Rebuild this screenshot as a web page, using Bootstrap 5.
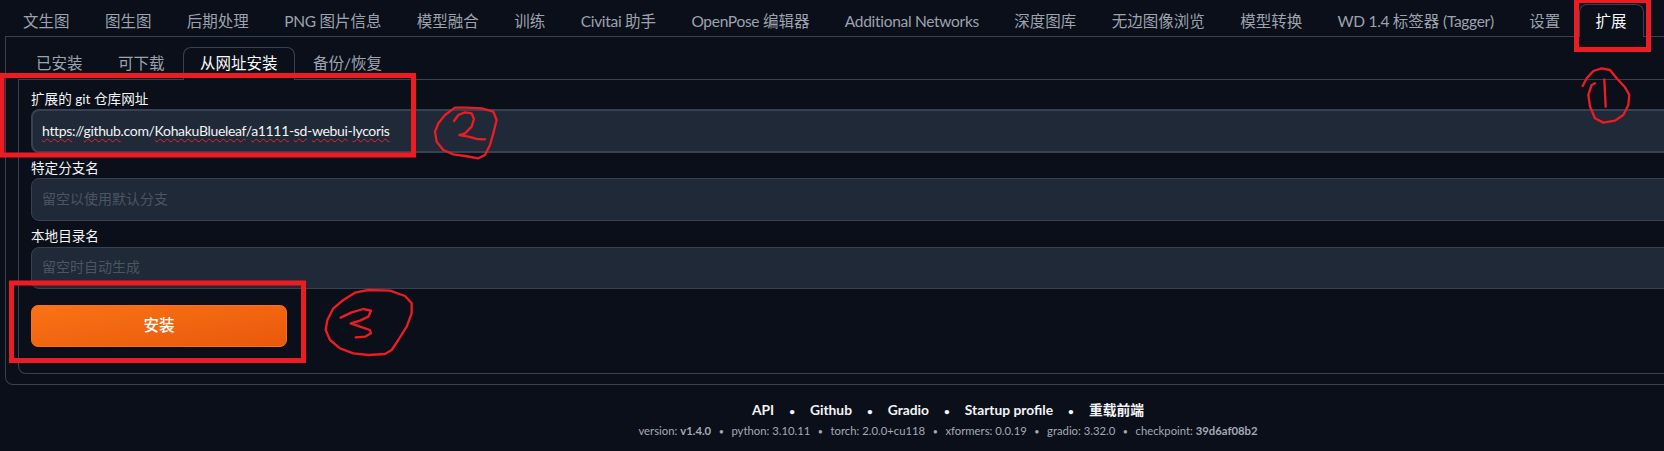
<!DOCTYPE html>
<html lang="zh-CN" data-bs-theme="dark">
<head>
    <meta charset="UTF-8">
    <meta name="viewport" content="width=device-width, initial-scale=1.0">
    <title>Extensions</title>

    <link href="https://cdn.jsdelivr.net/npm/bootstrap@5.3.3/dist/css/bootstrap.min.css" rel="stylesheet">
    <style>
        html, body { height: 451px; overflow: hidden; }
        body {
            position: relative;
            background: #0b0f19;
            color: #f3f4f6;
            font-family: Lato, "Noto Sans CJK SC", sans-serif;
        }
        /* the app is wider than the window, its right side is cut off */
        .app-wrap { width: 1886px; margin-left: 5px; }

        .webui-tabs { gap: 1.4px; border-bottom: 1px solid #374151; padding-top: 4px; padding-left: 1px; height: 37px; }
        .webui-sub { gap: 1.5px; border-bottom: 1px solid #374151; padding-left: 1px; height: 33px; }
        .webui-tabs .nav-link, .webui-sub .nav-link {
            height: 33px;
            padding: 0 16px;
            font-size: 15.5px;
            line-height: 31px;
            color: #9ca3af;
            white-space: nowrap;
            border: 1px solid transparent;
            border-bottom: 0;
            border-radius: 8px 8px 0 0;
            background: transparent;
            margin-bottom: -1px;
        }
        .webui-tabs .nav-link { line-height: 32px; }
        .webui-tabs .nav-link.active, .webui-sub .nav-link.active {
            color: #f9fafb;
            background: #0b0f19;
            border-color: #374151;
        }
        .lat { letter-spacing: -0.3px; }
        .outer-box {
            height: 348px;
            padding: 10px 12px;
            border: 1px solid #374151;
            border-top: 0;
            border-radius: 0 0 8px 8px;
        }
        .inner-box {
            height: 294px;
            padding: 9px 12px 0;
            border: 1px solid #374151;
            border-top: 0;
            border-radius: 0 0 8px 8px;
        }
        .field-label { font-size: 13.6px; line-height: 20px; margin-bottom: 0; color: #f3f4f6; display: block; }
        .label-gap { margin-top: 5px; padding-bottom: 1px; }
        .url-label-gap { margin-top: 5px; }
        .field-input {
            height: 42px;
            padding: 0 10px 3px;
            font-size: 14px;
            line-height: 36px;
            color: #f3f4f6;
            background: #1f2937;
            border: 1px solid #374151;
            border-radius: 8px;
            box-shadow: none;
        }
        .field-input::placeholder { color: #4b5563; }
        .branch-input { height: 43px; }
        .url-input { height: 44px; line-height: 39px; border-width: 2px; padding: 0 9px; letter-spacing: -0.33px; }
        .spell { text-decoration: underline wavy #e3262c 1px; text-underline-offset: 2px; text-decoration-skip-ink: none; }
        .install-btn {
            width: 256px;
            height: 42px;
            margin-top: 16px;
            padding: 0;
            font-size: 15.5px;
            font-weight: 500;
            color: #fff;
            border: 1px solid #f97316;
            border-radius: 7px;
            background: linear-gradient(to bottom right, #f97316, #ea580c);
        }
        .foot-links { font-size: 13.8px; font-weight: 700; line-height: 20px; color: #f3f4f6; padding-top: 15px; }
        .foot-links a { color: inherit; text-decoration: none; }
        .foot-links .dot { margin: 0 15px; font-size: 10px; }
        .foot-meta { font-size: 11.3px; line-height: 16px; color: #a3aab5; margin-top: 2px; }
        .foot-meta .dot { margin: 0 7.5px; font-size: 9px; }
        .foot-meta b { font-weight: 700; }
        .marks { position: absolute; left: 0; top: 0; pointer-events: none; }
        .marks * { fill: none; stroke: #ed1c24; stroke-linejoin: round; stroke-linecap: round; }
        .marks rect { stroke-linejoin: miter; stroke-width: 5; }
        .marks g path { stroke-width: 7; }
    </style>
</head>
<body>
    <div class="app-wrap">
        <ul class="nav webui-tabs">
            <li class="nav-item"><a class="nav-link" href="#">文生图</a></li>
            <li class="nav-item"><a class="nav-link" href="#">图生图</a></li>
            <li class="nav-item"><a class="nav-link" href="#">后期处理</a></li>
            <li class="nav-item"><a class="nav-link" href="#"><span class="lat">PNG </span>图片信息</a></li>
            <li class="nav-item"><a class="nav-link" href="#">模型融合</a></li>
            <li class="nav-item"><a class="nav-link" href="#">训练</a></li>
            <li class="nav-item"><a class="nav-link" href="#"><span class="lat">Civitai </span>助手</a></li>
            <li class="nav-item"><a class="nav-link" href="#"><span class="lat">OpenPose </span>编辑器</a></li>
            <li class="nav-item"><a class="nav-link" href="#"><span class="lat">Additional Networks</span></a></li>
            <li class="nav-item"><a class="nav-link" href="#">深度图库</a></li>
            <li class="nav-item"><a class="nav-link" href="#">无边图像浏览</a></li>
            <li class="nav-item"><a class="nav-link" href="#">模型转换</a></li>
            <li class="nav-item"><a class="nav-link" href="#"><span class="lat">WD 1.4 </span>标签器<span class="lat"> (Tagger)</span></a></li>
            <li class="nav-item"><a class="nav-link" href="#">设置</a></li>
            <li class="nav-item"><a class="nav-link active" href="#">扩展</a></li>
        </ul>
        <div class="outer-box">
            <ul class="nav webui-sub">
                <li class="nav-item"><a class="nav-link" href="#">已安装</a></li>
                <li class="nav-item"><a class="nav-link" href="#">可下载</a></li>
                <li class="nav-item"><a class="nav-link active" href="#">从网址安装</a></li>
                <li class="nav-item"><a class="nav-link" href="#">备份/恢复</a></li>
            </ul>
            <div class="inner-box">
                <label class="field-label">扩展的 git 仓库网址</label>
                <div class="form-control field-input url-input"><span class="spell">https</span>://<span class="spell">github</span>.com/<span class="spell">KohakuBlueleaf</span>/<span class="spell">a1111</span>-<span class="spell">sd</span>-<span class="spell">webui</span>-<span class="spell">lycoris</span></div>
                <label class="field-label url-label-gap">特定分支名</label>
                <input type="text" class="form-control field-input branch-input" placeholder="留空以使用默认分支">
                <label class="field-label label-gap">本地目录名</label>
                <input type="text" class="form-control field-input" placeholder="留空时自动生成">
                <button class="btn install-btn d-block">安装</button>
            </div>
        </div>
        <div class="text-center">
            <div class="foot-links"><a href="#">API</a><span class="dot">•</span><a href="#">Github</a><span class="dot">•</span><a href="#">Gradio</a><span class="dot">•</span><a href="#">Startup profile</a><span class="dot">•</span><a href="#">重载前端</a></div>
            <div class="foot-meta">version: <b>v1.4.0</b><span class="dot">•</span>python: 3.10.11<span class="dot">•</span>torch: 2.0.0+cu118<span class="dot">•</span>xformers: 0.0.19<span class="dot">•</span>gradio: 3.32.0<span class="dot">•</span>checkpoint: <b>39d6af08b2</b></div>
        </div>
    </div>

    <!-- red marks drawn on top of the screenshot -->
    <svg class="marks" width="1664" height="451" viewBox="0 0 1664 451">
        <rect x="1576.5" y="0.5" width="72" height="49"></rect>
        <rect x="2" y="75.5" width="411.5" height="79.5"></rect>
        <rect x="11.5" y="283" width="292" height="77.5"></rect>
        <g transform="translate(1560 0) scale(.3333)">
            <path d="M68 258 L80 235 L100 213 L125 205 L150 210 L170 235 L195 262 L208 285 L205 315 L190 345 L165 362 L130 368 L105 355 L90 320 L85 285 L95 255 L105 250"></path>
            <path d="M133 238 L137 320"></path>
        </g>
        <g transform="translate(410 95) scale(.3333)">
            <path d="M135 38 L105 60 L85 85 L75 110 L80 140 L100 165 L130 178 L165 183 L205 190 L225 180 L240 150 L250 115 L260 75 L250 50 L215 40 L170 38 L135 38"></path>
            <path d="M132 78 L145 60 L165 52 L185 55 L192 72 L185 95 L165 115 L148 120 L175 125 L200 132 L225 133"></path>
        </g>
        <g transform="translate(310 280) scale(.3333)">
            <path d="M240 32 L175 30 L135 38 L100 60 L70 85 L52 120 L47 150 L60 180 L90 205 L130 220 L175 225 L225 222 L245 210 L265 180 L290 140 L305 100 L305 70 L285 48 L240 32"></path>
            <path d="M92 113 L125 97 L160 87 L183 92 L175 110 L150 122 L122 130 L150 140 L180 150 L183 160 L165 170 L137 172"></path>
        </g>
    </svg>

    <script src="https://cdn.jsdelivr.net/npm/bootstrap@5.3.3/dist/js/bootstrap.bundle.min.js"></script>
</body>
</html>
